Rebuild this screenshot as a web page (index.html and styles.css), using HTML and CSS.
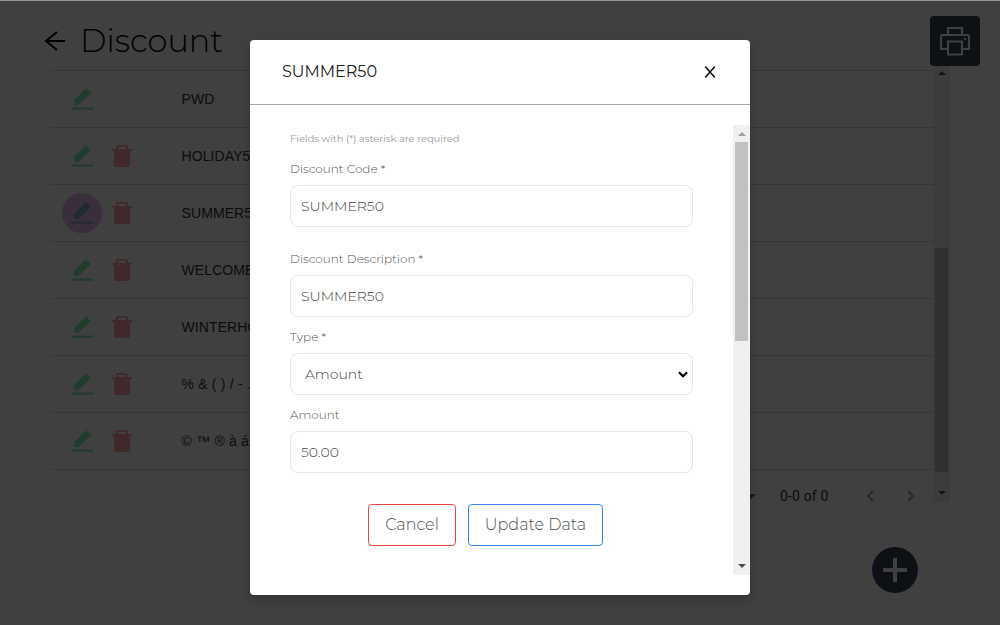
FILE: index.html
```html
<!DOCTYPE html>
<html lang="en">
<head>
<meta charset="utf-8">
<title>Discount</title>
<link rel="stylesheet" href="styles.css">
</head>
<body>
<svg class="defs" aria-hidden="true">
  <symbol id="pen" viewBox="0 0 24 24"><path d="M4.200 18V12.800L16 1.200l4.700 4.700L9.200 17.300Q8.400 18 7.400 18Z"/><rect x="1.200" y="20.600" width="22" height="2.200" rx="1"/></symbol>
  <symbol id="bin" viewBox="0 0 20 22"><path fill-rule="evenodd" d="M4 4V2Q4 0 6 0h8q2 0 2 2v2h4v2h-2v14q0 2-2 2H4q-2 0-2-2V6H0V4ZM6 4h8V2H6Z"/></symbol>
</svg>
<main class="page">
  <header class="top">
    <svg class="back" viewBox="0 0 20 20"><path d="M20 10H1M12 1L1 10l11 9"/></svg>
    <h1 class="title">Discount</h1>
    <button class="print" aria-label="Print"><svg viewBox="0 0 30 30"><path d="M8 9V2h14v7M8 23H1V11q0-2 2-2h24q2 0 2 2v12h-7M8 15.500h14v13H8Z"/><circle cx="25" cy="13" r=".5"/></svg></button>
  </header>
  <section class="list">
    <div class="table">
      <div class="row"><span class="edit"><svg class="pen"><use href="#pen"/></svg></span><span class="del"></span><span class="code">PWD</span></div>
      <div class="row"><span class="edit"><svg class="pen"><use href="#pen"/></svg></span><span class="del"><svg class="bin"><use href="#bin"/></svg></span><span class="code">HOLIDAY50</span></div>
      <div class="row"><span class="edit active"><svg class="pen"><use href="#pen"/></svg></span><span class="del"><svg class="bin"><use href="#bin"/></svg></span><span class="code">SUMMER50</span></div>
      <div class="row"><span class="edit"><svg class="pen"><use href="#pen"/></svg></span><span class="del"><svg class="bin"><use href="#bin"/></svg></span><span class="code">WELCOME</span></div>
      <div class="row"><span class="edit"><svg class="pen"><use href="#pen"/></svg></span><span class="del"><svg class="bin"><use href="#bin"/></svg></span><span class="code">WINTERHO</span></div>
      <div class="row"><span class="edit"><svg class="pen"><use href="#pen"/></svg></span><span class="del"><svg class="bin"><use href="#bin"/></svg></span><span class="code symbols">% &amp; ( ) / - .</span></div>
      <div class="row"><span class="edit"><svg class="pen"><use href="#pen"/></svg></span><span class="del"><svg class="bin"><use href="#bin"/></svg></span><span class="code symbols">© ™ ® à á</span></div>
      <div class="pager">
        <svg class="caret" viewBox="0 0 10 5"><path d="M0 0h10L5 5Z"/></svg>
        <span class="count">0-0 of 0</span>
        <svg class="chev prev" viewBox="0 0 8 12"><path d="M7 1L2 6l5 5"/></svg>
        <svg class="chev" viewBox="0 0 8 12"><path d="M1 1l5 5-5 5"/></svg>
      </div>
    </div>
    <div class="bar bar-page"><svg class="tri" viewBox="0 0 8 4"><path d="M0 4h8L4 0Z"/></svg><i class="thumb"></i><svg class="tri" viewBox="0 0 8 4"><path d="M0 0h8L4 4Z"/></svg></div>
  </section>
  <footer class="actions"><button class="add" aria-label="Add"><svg viewBox="0 0 24 24"><path d="M12 0v24M0 12h24"/></svg></button></footer>
</main>
<div class="modal" role="dialog">
  <header class="modal-head"><h2 class="modal-title">SUMMER50</h2><button class="close" aria-label="Close"><svg viewBox="0 0 12 13"><path d="M.8.6l10.400 11.800M11.200.6L.8 12.400"/></svg></button></header>
  <div class="modal-body">
    <form class="form">
      <p class="note">Fields with (*) asterisk are required</p>
      <label class="label">Discount Code *</label>
      <div class="field">SUMMER50</div>
      <label class="label gap">Discount Description *</label>
      <div class="field">SUMMER50</div>
      <label class="label">Type *</label>
      <div class="field select"><span>Amount</span><svg class="down" viewBox="0 0 10 7"><path d="M1 1.300l4 4 4-4"/></svg></div>
      <label class="label">Amount</label>
      <div class="field">50.00</div>
      <div class="buttons"><button type="button" class="btn cancel">Cancel</button><button type="button" class="btn update">Update Data</button></div>
    </form>
    <div class="bar bar-modal"><svg class="tri up" viewBox="0 0 8 4"><path d="M0 4h8L4 0Z"/></svg><i class="thumb"></i><svg class="tri" viewBox="0 0 8 4"><path d="M0 0h8L4 4Z"/></svg></div>
  </div>
</div>
</body>
</html>
```
FILE: styles.css
```css
* { box-sizing: border-box; margin: 0; padding: 0; }
body { width: 1000px; height: 625px; overflow: hidden; position: relative; background: #404040; font-family: Montserrat, Inter, sans-serif; }
.defs { position: absolute; width: 0; height: 0; }
svg { display: block; overflow: visible; }
button { background: none; border: 0; font: inherit; }
.page { height: 625px; display: flex; flex-direction: column; border-top: 1px solid #8f9592; }
.top { height: 69px; flex: none; display: flex; align-items: flex-start; padding: 15px 20px 0 45px; }
.back { width: 20px; height: 20px; margin-top: 15px; fill: none; stroke: #000; stroke-width: 2; }
.title { margin-left: 15px; font-size: 32px; line-height: 50px; font-weight: 300; color: #000; white-space: nowrap; }
.print { width: 50px; height: 50px; margin-left: auto; border-radius: 4px; background: #0d1116; display: grid; place-items: center; }
.print svg { width: 30px; height: 30px; fill: none; stroke: #404040; stroke-width: 2.200; }
.print circle { stroke-width: 1.500; }
.list { display: flex; padding-left: 50px; height: 432px; flex: none; }
.table { width: 883px; }
.row { height: 57px; border-top: 1px solid #353637; display: flex; align-items: center; padding-left: 12px; }
.edit { width: 40px; height: 40px; border-radius: 50%; display: grid; place-items: center; }
.edit.active { background: #392f3a; }
.pen { width: 24px; height: 24px; fill: #213c2c; }
.active .pen { fill: #202c2c; }
.del { width: 40px; display: grid; place-items: center; }
.bin { width: 20px; height: 22px; fill: #40292a; }
.code { margin-left: 39.5px; font: 14px "Liberation Sans", sans-serif; color: #0c0c0c; white-space: nowrap; letter-spacing: .1px; }
.symbols { letter-spacing: .2px; }
.pager { height: 33px; border-top: 1px solid #353637; display: flex; align-items: center; padding: 20px 18px 0 0; justify-content: flex-end; }
.caret { width: 10px; height: 5px; fill: #1c1c1c; margin-right: 24px; }
.count { font: 14px Roboto, sans-serif; letter-spacing: .15px; color: #0c0c0c; width: 86px; white-space: nowrap; }
.chev { width: 8px; height: 12px; fill: none; stroke: #292929; stroke-width: 1.8; }
.prev { margin-right: 33px; }
.bar { width: 17px; display: flex; flex-direction: column; align-items: center; }
.bar .tri { width: 8px; height: 4px; flex: none; }
.bar-page { height: 436px; margin-top: -4px; background: #3c3c3c; padding: 5px 0 7px; justify-content: space-between; }
.bar-page .tri { fill: #151515; }
.bar-page .thumb { width: 13px; height: 224px; background: #303030; margin-top: auto; margin-bottom: 19px; }
.actions { flex: 1; display: flex; justify-content: flex-end; padding: 45px 82px 0 0; }
.add { width: 46px; height: 46px; border-radius: 50%; background: #0d1116; display: grid; place-items: center; }
.add svg { width: 24px; height: 24px; fill: none; stroke: #404040; stroke-width: 4; }
.modal { position: absolute; left: 250px; top: 40px; width: 500px; height: 555px; border-radius: 4px; background: #fff; box-shadow: 0 5px 12px rgba(0,0,0,.2); display: flex; flex-direction: column; }
.modal-head { height: 65px; flex: none; border-bottom: 1px solid #aaa; padding: 0 34px 0 32px; display: flex; align-items: center; justify-content: space-between; }
.modal-title { margin-top: -1px; font-size: 16px; font-weight: 400; color: #222; }
.close svg { width: 12px; height: 12px; stroke: #111; stroke-width: 1.7; }
.modal-body { margin-top: 20px; height: 450px; display: flex; }
.form { width: 483px; padding: 5px 40px 0; }
.note { font-size: 10px; line-height: 18px; height: 18px; color: #9a9aa2; font-weight: 400; letter-spacing: -.07px; white-space: nowrap; }
.label { display: block; height: 36px; padding-top: 11px; font-size: 12px; line-height: 18px; font-weight: 300; color: #505050; white-space: nowrap; }
.note + .label { height: 37px; padding-top: 12px; }
.label.gap { height: 48px; padding-top: 23px; }
.field { width: 403px; height: 42px; border: 1px solid #e5e5ea; border-radius: 8px; padding: 0 10px; display: flex; align-items: center; font-size: 14px; font-weight: 300; color: #444; }
.select { justify-content: space-between; padding: 0 4px 0 14px; }
.down { width: 10px; height: 7px; fill: none; stroke: #000; stroke-width: 2.200; }
.buttons { display: flex; gap: 12px; margin: 31px 0 0 78px; }
.btn { height: 42px; border: 1px solid #ef4444; border-radius: 4px; padding-bottom: 1px; font-size: 16px; font-weight: 300; color: #505050; white-space: nowrap; }
.cancel { width: 88px; }
.update { width: 135px; border-color: #3b82f6; }
.bar-modal { background: #f0f0f0; padding: 7px 0; justify-content: space-between; }
.bar-modal .tri { fill: #505050; }
.bar-modal .up { fill: #a0a0a0; }
.bar-modal .thumb { width: 13px; height: 199px; background: #c1c1c1; margin: 6px 0 auto; }
```
